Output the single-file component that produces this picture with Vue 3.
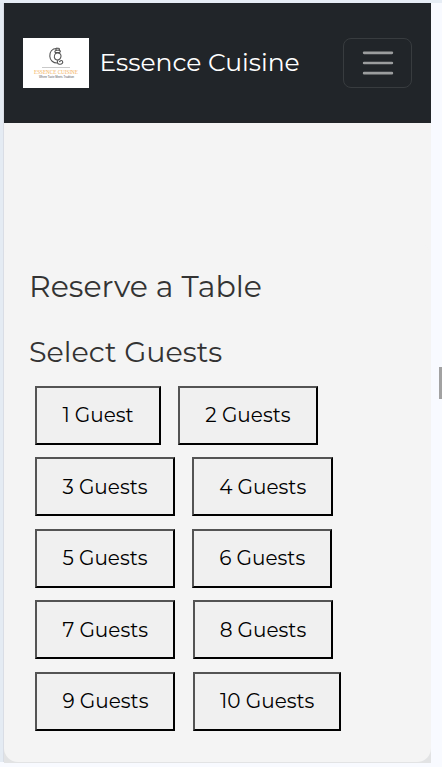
<script setup>
const guests = Array.from({ length: 10 }, (_, i) => `${i + 1} ${i === 0 ? 'Guest' : 'Guests'}`)
</script>

<template>
  <div class="page">
    <div class="phone">
      <header class="navbar">
        <svg class="logo" viewBox="0 0 66 50" role="img">
          <rect width="66" height="50" fill="#fff" />
          <g fill="none" stroke="#555" stroke-width="1.1">
            <path d="M33.500 10.500C29 10.500 26.500 14 26.800 18.200c.2 4.300 3.500 7 7.700 6.800" />
            <path d="M32.500 15.500c-2 2.500-1.500 5.500 1.200 6.400 3 .5 4.800-2.300 4.200-4.900-.4-1.700-3.400-2.800-5.400-1.500z" />
            <path d="M32.300 14.500c-1.200-1.200.3-2.500 2.300-2.300 2.700-.4 3.600 1.400 1.800 2.300zM33.100 12.300c-.8-1.500.5-2.700 1.700-1.900 1.600-.5 2.200 1 1.100 1.900M35 22c-1.200 1.500-.8 3.900 1.300 4.200 2.600.5 4.200-1.400 3.100-3.200-1-1.300-2.500 0-3.200 1" />
          </g>
          <path d="M19 29.500h28" stroke="#bbb" stroke-width=".8" />
          <text x="11" y="36" class="logo-name" textLength="44" lengthAdjust="spacingAndGlyphs">ESSENCE CUISINE</text>
          <text x="16" y="40.200" class="logo-sub" textLength="35" lengthAdjust="spacingAndGlyphs">Where Taste Meets Tradition</text>
        </svg>
        <span class="brand">Essence Cuisine</span>
        <button class="toggler" aria-label="Menu">
          <svg width="38" height="38" viewBox="0 0 30 30">
            <path d="M4 7h22M4 15h22M4 23h22" stroke="#9b9d9e" stroke-width="2" stroke-linecap="round" />
          </svg>
        </button>
      </header>
      <div class="spacer"></div>
      <div class="corners">
        <main class="card">
          <h1 class="title">Reserve a Table</h1>
          <h2 class="subtitle">Select Guests</h2>
          <div class="options">
            <button v-for="label in guests" :key="label" class="guest">{{ label }}</button>
          </div>
        </main>
      </div>
    </div>
  </div>
  <i class="scroll-thumb"></i>
</template>

<style>
body {
  background: #f8faff;
  overflow: hidden;
}
</style>

<style scoped>
.page {
  box-sizing: border-box;
  height: 767px;
  padding: 3px 11px 0 4px;
  background: linear-gradient(#e6edf5, #e6edf5) 0 0 / 100% 3px no-repeat,
    linear-gradient(90deg, #e4ebf3 3px, #d9dde5 3px) 0 0 / 4px 762px no-repeat, #f8faff;
  font-family: Montserrat, Inter, sans-serif;
}
.phone {
  height: 760px;
}
.navbar {
  box-sizing: border-box;
  display: flex;
  align-items: center;
  height: 120px;
  padding: 0 19px;
  background: #212529;
}
.logo {
  width: 66px;
  height: 50px;
  flex: none;
}
.logo-name {
  font: 6.4px "Liberation Serif", serif;
  fill: #f3b15c;
}
.logo-sub {
  font: 2.8px "Liberation Sans", sans-serif;
  fill: #555;
}
.brand {
  margin-left: 10.5px;
  padding-bottom: 2px;
  color: #fff;
  font-size: 25px;
  white-space: nowrap;
}
.toggler {
  box-sizing: border-box;
  display: flex;
  align-items: center;
  justify-content: center;
  width: 69px;
  height: 50px;
  margin-left: auto;
  padding: 0;
  flex: none;
  border: 1px solid #383c3f;
  border-radius: 8px;
  background: transparent;
}
.spacer {
  height: 120px;
  background: #f4f4f4;
}
.corners {
  height: 520px;
  background: linear-gradient(#f4f4f4 50%, #e2e3e4 50%);
}
.card {
  box-sizing: border-box;
  height: 519px;
  padding: 26px 0 0 25px;
  border-radius: 14px;
  background: #f4f4f4;
}
.title,
.subtitle {
  margin: 0;
  color: #333;
  font-size: 30px;
  font-weight: 400;
  line-height: 36px;
  white-space: nowrap;
}
.subtitle {
  margin-top: 29px;
  font-size: 28.6px;
}
.options {
  display: flex;
  flex-wrap: wrap;
  gap: 12.5px 17.6px;
  margin: 15.6px 0 0 6.4px;
}
.guest {
  box-sizing: border-box;
  height: 59px;
  padding: 0 25px;
  border: 2px outset #000;
  background: #f0f0f0;
  color: #000;
  font: 400 20px Montserrat, Inter, sans-serif;
  white-space: nowrap;
}
.scroll-thumb {
  position: absolute;
  top: 367px;
  right: 0;
  width: 3px;
  height: 32px;
  background: #a2a2a2;
}
</style>
